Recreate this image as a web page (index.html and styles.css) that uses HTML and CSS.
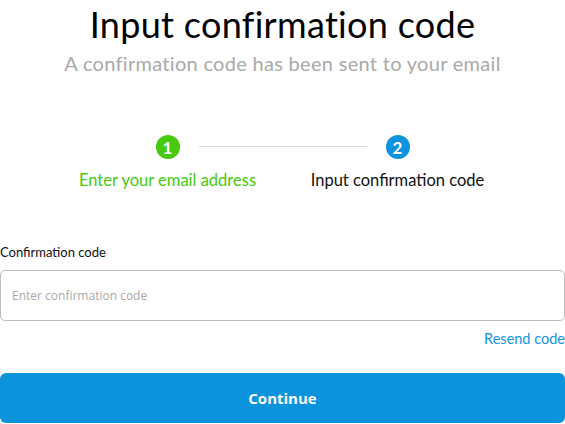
FILE: index.html
```html
<!DOCTYPE html>
<html lang="en">
<head>
<meta charset="utf-8">
<title>Input confirmation code</title>
<link rel="stylesheet" href="styles.css">
</head>
<body>
<main class="page">
  <header class="head">
    <h1 class="title">Input confirmation code</h1>
    <p class="subtitle">A confirmation code has been sent to your email</p>
  </header>
  <ol class="steps">
    <li class="step done">
      <span class="dot">1</span>
      <span class="step-label">Enter your email address</span>
    </li>
    <li class="step-line" aria-hidden="true"></li>
    <li class="step active">
      <span class="dot">2</span>
      <span class="step-label">Input confirmation code</span>
    </li>
  </ol>
  <form class="form">
    <label class="label" for="code">Confirmation code</label>
    <input class="input" id="code" type="text" placeholder="Enter confirmation code">
    <div class="resend-row"><a class="resend" href="#">Resend code</a></div>
    <button class="btn" type="button">Continue</button>
  </form>
</main>
</body>
</html>
```
FILE: styles.css
```css
* { box-sizing: border-box; }
html, body { margin: 0; padding: 0; background: #fff; }
body { font-family: "Lato", "Open Sans", sans-serif; color: #000; }
.page { width: 565px; display: flex; flex-direction: column; }
.head { text-align: center; }
.title { margin: 0; font-size: 36px; font-weight: 400; line-height: 48px; letter-spacing: 0.3px; }
.subtitle { margin: 3px 0 0; font-size: 20px; line-height: 24px; color: #a9a9a9; letter-spacing: 0.3px; }
.steps { list-style: none; margin: 60px 0 0; padding: 0; display: flex; align-items: flex-start; justify-content: center; }
.step { display: flex; flex-direction: column; align-items: center; width: 200px; }
.step-line { width: 168px; height: 1px; background: #dcdcdc; margin: 11px -69px 0; }
.dot { width: 24px; height: 24px; border-radius: 50%; color: #fff; font-size: 17px; font-weight: 700; display: flex; align-items: center; justify-content: center; line-height: 1; }
.done .dot { background: #47c90e; }
.active .dot { background: #0d93dd; }
.step-label { margin-top: 11px; font-size: 16.5px; line-height: 20px; white-space: nowrap; }
.done .step-label { color: #47c90e; }
.active .step-label { color: #111; }
.form { display: flex; flex-direction: column; margin-top: 53px; }
.label { font-size: 13px; line-height: 18px; color: #111; }
.input { margin-top: 9px; height: 51px; width: 565px; border: 1px solid #bdbdbd; border-radius: 5px; padding: 0 11px; font-family: "Open Sans", sans-serif; font-size: 12px; color: #333; outline: none; }
.input::placeholder { color: #aaa; }
.resend-row { display: flex; justify-content: flex-end; margin-top: 9px; }
.resend { font-size: 14.5px; line-height: 18px; color: #1593dd; text-decoration: none; }
.btn { margin-top: 25px; height: 50px; width: 565px; border: 0; border-radius: 6px; background: #0b93dc; color: #fff; font-family: "Open Sans", sans-serif; font-size: 15px; font-weight: 700; }
```
